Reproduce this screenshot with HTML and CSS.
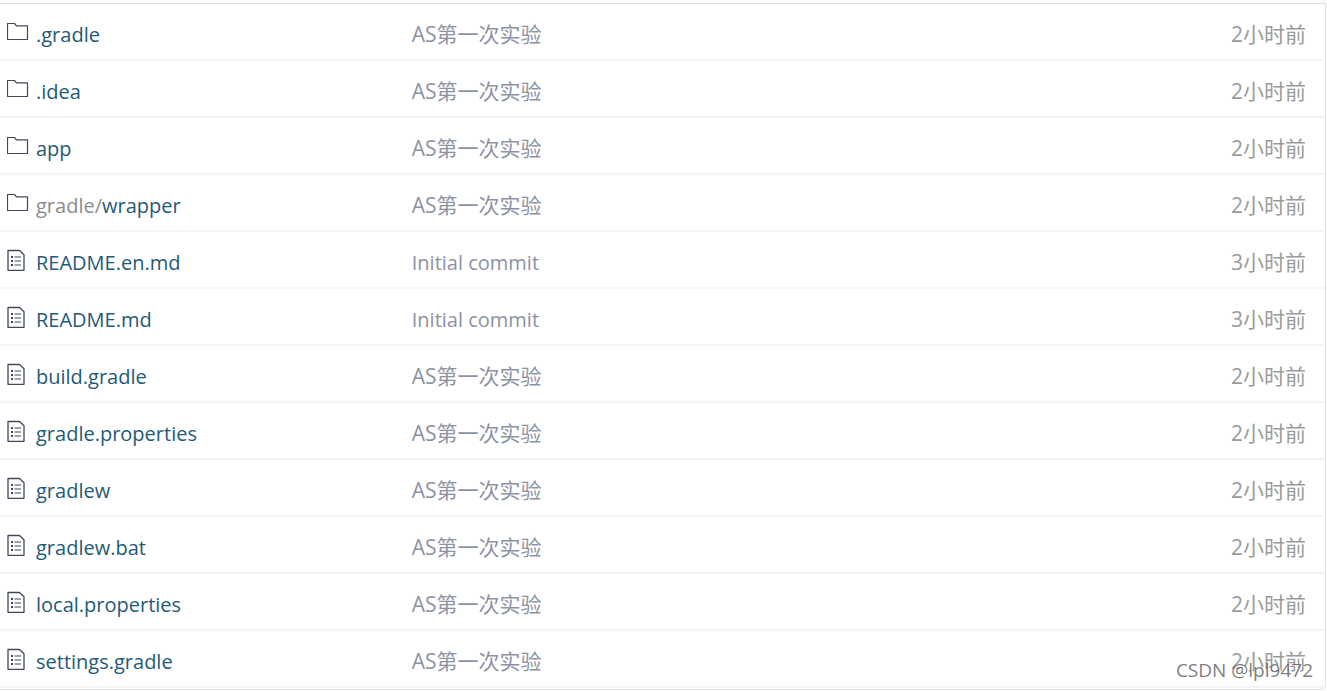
FILE: index.html
```html
<!DOCTYPE html>
<html lang="zh-CN">
<head>
  <meta charset="UTF-8">
  <meta name="viewport" content="width=device-width, initial-scale=1.0">
  <title>文件列表</title>
  <link rel="stylesheet" href="styles.css">
</head>
<body>
  <!-- shared icons -->
  <svg class="icon-defs" aria-hidden="true">
    <symbol id="icon-folder" viewBox="0 0 22 22">
      <path d="M.5 2.5H7.5L9.5 4.8H20.5V18.5H.5Z" fill="none" stroke="currentColor" stroke-width="1.2" stroke-linejoin="round"/>
    </symbol>
    <symbol id="icon-file" viewBox="0 0 22 22">
      <path d="M1 1.5H12.5L17 5.8V21.3H1Z" fill="none" stroke="currentColor" stroke-width="1.3" stroke-linejoin="round"/>
      <path d="M4 8H6M4 12H6M4 16H6" stroke="currentColor" stroke-width="2"/>
      <path d="M7.5 8H14M7.5 12H14M7.5 16H14" stroke="currentColor" stroke-width="1.2"/>
    </symbol>
  </svg>

  <main class="tree-box">
    <table class="tree-table">
      <tbody>
        <tr>
          <td class="name"><div class="entry"><svg class="icon" aria-hidden="true"><use href="#icon-folder"/></svg><a href="#">.gradle</a></div></td>
          <td class="message"><a href="#">AS第一次实验</a></td>
          <td class="age">2小时前</td>
        </tr>
        <tr>
          <td class="name"><div class="entry"><svg class="icon" aria-hidden="true"><use href="#icon-folder"/></svg><a href="#">.idea</a></div></td>
          <td class="message"><a href="#">AS第一次实验</a></td>
          <td class="age">2小时前</td>
        </tr>
        <tr>
          <td class="name"><div class="entry"><svg class="icon" aria-hidden="true"><use href="#icon-folder"/></svg><a href="#">app</a></div></td>
          <td class="message"><a href="#">AS第一次实验</a></td>
          <td class="age">2小时前</td>
        </tr>
        <tr>
          <td class="name"><div class="entry"><svg class="icon" aria-hidden="true"><use href="#icon-folder"/></svg><a href="#"><span class="parent">gradle/</span>wrapper</a></div></td>
          <td class="message"><a href="#">AS第一次实验</a></td>
          <td class="age">2小时前</td>
        </tr>
        <tr>
          <td class="name"><div class="entry"><svg class="icon" aria-hidden="true"><use href="#icon-file"/></svg><a href="#">README.en.md</a></div></td>
          <td class="message" lang="en"><a href="#">Initial commit</a></td>
          <td class="age">3小时前</td>
        </tr>
        <tr>
          <td class="name"><div class="entry"><svg class="icon" aria-hidden="true"><use href="#icon-file"/></svg><a href="#">README.md</a></div></td>
          <td class="message" lang="en"><a href="#">Initial commit</a></td>
          <td class="age">3小时前</td>
        </tr>
        <tr>
          <td class="name"><div class="entry"><svg class="icon" aria-hidden="true"><use href="#icon-file"/></svg><a href="#">build.gradle</a></div></td>
          <td class="message"><a href="#">AS第一次实验</a></td>
          <td class="age">2小时前</td>
        </tr>
        <tr>
          <td class="name"><div class="entry"><svg class="icon" aria-hidden="true"><use href="#icon-file"/></svg><a href="#">gradle.properties</a></div></td>
          <td class="message"><a href="#">AS第一次实验</a></td>
          <td class="age">2小时前</td>
        </tr>
        <tr>
          <td class="name"><div class="entry"><svg class="icon" aria-hidden="true"><use href="#icon-file"/></svg><a href="#">gradlew</a></div></td>
          <td class="message"><a href="#">AS第一次实验</a></td>
          <td class="age">2小时前</td>
        </tr>
        <tr>
          <td class="name"><div class="entry"><svg class="icon" aria-hidden="true"><use href="#icon-file"/></svg><a href="#">gradlew.bat</a></div></td>
          <td class="message"><a href="#">AS第一次实验</a></td>
          <td class="age">2小时前</td>
        </tr>
        <tr>
          <td class="name"><div class="entry"><svg class="icon" aria-hidden="true"><use href="#icon-file"/></svg><a href="#">local.properties</a></div></td>
          <td class="message"><a href="#">AS第一次实验</a></td>
          <td class="age">2小时前</td>
        </tr>
        <tr>
          <td class="name"><div class="entry"><svg class="icon" aria-hidden="true"><use href="#icon-file"/></svg><a href="#">settings.gradle</a></div></td>
          <td class="message"><a href="#">AS第一次实验</a></td>
          <td class="age">2小时前</td>
        </tr>
      </tbody>
    </table>
    <span class="watermark">CSDN @lpl9472</span>
  </main>
</body>
</html>
```
FILE: styles.css
```css
* {
  box-sizing: border-box;
}

body {
  margin: 0;
  background: #fff;
  font-family: "Open Sans", "Noto Sans CJK SC", sans-serif;
  font-size: 20px;
  line-height: 28px;
}

a {
  color: inherit;
  text-decoration: none;
}

.icon-defs {
  position: absolute;
  width: 0;
  height: 0;
}

.tree-box {
  position: relative;
  margin-right: 1px;
  border-top: 1px solid #dfdfe0;
  border-right: 1px solid #dfe1e5;
  border-bottom: 1px solid #dfe1e5;
  border-bottom-right-radius: 5px;
}

/* strip of the header above the list */
body::before {
  content: "";
  display: block;
  height: 3px;
  background: #fafafa;
}

.tree-table {
  width: 100%;
  border-collapse: separate;
  border-spacing: 0;
  table-layout: fixed;
  padding-bottom: 1px;
}

.tree-table td {
  height: 57px;
  padding: 6px 0 0;
  border-bottom: 2px solid #f4f5f7;
  white-space: nowrap;
  vertical-align: middle;
}

.tree-table .name {
  width: 31%;
  padding-left: 7px;
  color: #1f5a78;
}

.entry {
  display: flex;
  align-items: center;
  gap: 7px;
}

.icon {
  flex: none;
  width: 22px;
  height: 22px;
  margin-bottom: 6px;
  color: #40485b;
}

.parent {
  color: #8c8c8c;
}

.tree-table .message {
  padding-left: 1px;
  color: #8c92a4;
}

.tree-table .age {
  width: 15%;
  padding-right: 19px;
  color: #9b9b9b;
  text-align: right;
}

.tree-table .message,
.tree-table .age {
  padding-top: 4px;
  font-size: 21px;
}

.tree-table .message:lang(en) {
  padding-top: 6px;
  font-size: 20px;
}

.watermark {
  position: absolute;
  right: 12px;
  bottom: 5px;
  color: rgba(90, 90, 90, 0.8);
  font-size: 19px;
  text-shadow: 1px 1px 0 #fff;
}
```
